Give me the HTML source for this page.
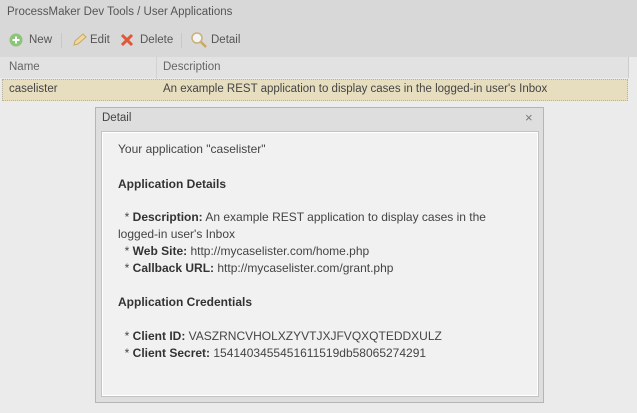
<!DOCTYPE html>
<html><head><meta charset="utf-8"><style>
body{margin:0;width:637px;height:413px;background:#ebebeb;font-family:"Liberation Sans",sans-serif;font-size:12px;color:#444;position:relative;overflow:hidden}
.a{position:absolute}
.s{font-size:11.5px}
#title{left:0;top:0;width:637px;height:27px;background:#d8d8d8}
#tb{left:0;top:27px;width:637px;height:30px;background:#d8d8d8}
#hdr{left:0;top:57px;width:628px;height:21px;background:#e2e2e2;border-right:1px solid #ccc}
#row{left:2px;top:79px;width:624px;height:20px;background:#e7dec0;border:1px dotted #b8b09a}
#dlg{left:95px;top:107px;width:449px;height:296px;background:#dedede;border:1px solid #b5b5b5;box-sizing:border-box}
#inner{left:101px;top:131px;width:438px;height:266px;background:#f1f1f1;border:1px solid #c4c4c4;box-sizing:border-box;box-shadow:inset 0 0 0 1px #fff}
.t{position:absolute;left:118px;white-space:nowrap}
b{color:#333}
</style></head><body>
<div class="a" id="title"></div>
<div class="a s" style="left:7px;top:6px;color:#555">ProcessMaker Dev Tools / User Applications</div>
<div class="a" id="tb"></div>
<svg class="a" style="left:9px;top:33px" width="14" height="14"><circle cx="7" cy="7" r="6.5" fill="#8cc47a"/><path d="M7 3.5v7M3.5 7h7" stroke="#fff" stroke-width="2"/></svg>
<div class="a s" style="left:29px;top:34px;color:#555">New</div>
<div class="a" style="left:61px;top:33px;width:1px;height:15px;background:#c8c8c8"></div>
<svg class="a" style="left:71px;top:32px" width="16" height="16"><path d="M3 13l1-4 8-7 3 3-8 7z" fill="#eed9a0" stroke="#c9a860"/></svg>
<div class="a s" style="left:90px;top:34px;color:#555">Edit</div>
<svg class="a" style="left:120px;top:33px" width="14" height="14"><path d="M2 2l10 10M12 2L2 12" stroke="#e0583a" stroke-width="3"/></svg>
<div class="a s" style="left:140px;top:34px;color:#555">Delete</div>
<div class="a" style="left:181px;top:33px;width:1px;height:15px;background:#c8c8c8"></div>
<svg class="a" style="left:190px;top:31px" width="18" height="18"><circle cx="7" cy="7" r="5" fill="#f4f4f4" stroke="#c9b27a" stroke-width="1.5"/><path d="M11 11l5 5" stroke="#c9a860" stroke-width="2.5"/></svg>
<div class="a s" style="left:211px;top:34px;color:#555">Detail</div>
<div class="a" id="hdr"></div>
<div class="a" style="left:156px;top:57px;width:1px;height:43px;background:#d2d2d2"></div>
<div class="a s" style="left:9px;top:61px;color:#666">Name</div>
<div class="a s" style="left:163px;top:61px;color:#666">Description</div>
<div class="a" id="row"></div>
<div class="a s" style="left:9px;top:83px">caselister</div>
<div class="a s" style="left:163px;top:83px">An example REST application to display cases in the logged-in user's Inbox</div>
<div class="a" id="dlg"></div>
<div class="a s" style="left:102px;top:112px;color:#444">Detail</div>
<div class="a" style="left:525px;top:110px;color:#777;font-size:13px">×</div>
<div class="a" id="inner"></div>
<div class="t" style="top:142px">Your application "caselister"</div>
<div class="t" style="top:177px"><b>Application Details</b></div>
<div class="t" style="top:210px">&nbsp;&nbsp;* <b>Description:</b> An example REST application to display cases in the</div>
<div class="t" style="top:227px">logged-in user's Inbox</div>
<div class="t" style="top:244px">&nbsp;&nbsp;* <b>Web Site:</b> http://mycaselister.com/home.php</div>
<div class="t" style="top:261px">&nbsp;&nbsp;* <b>Callback URL:</b> http://mycaselister.com/grant.php</div>
<div class="t" style="top:295px"><b>Application Credentials</b></div>
<div class="t" style="top:329px">&nbsp;&nbsp;* <b>Client ID:</b> VASZRNCVHOLXZYVTJXJFVQXQTEDDXULZ</div>
<div class="t" style="top:346px">&nbsp;&nbsp;* <b>Client Secret:</b> 1541403455451611519db58065274291</div>
</body></html>
